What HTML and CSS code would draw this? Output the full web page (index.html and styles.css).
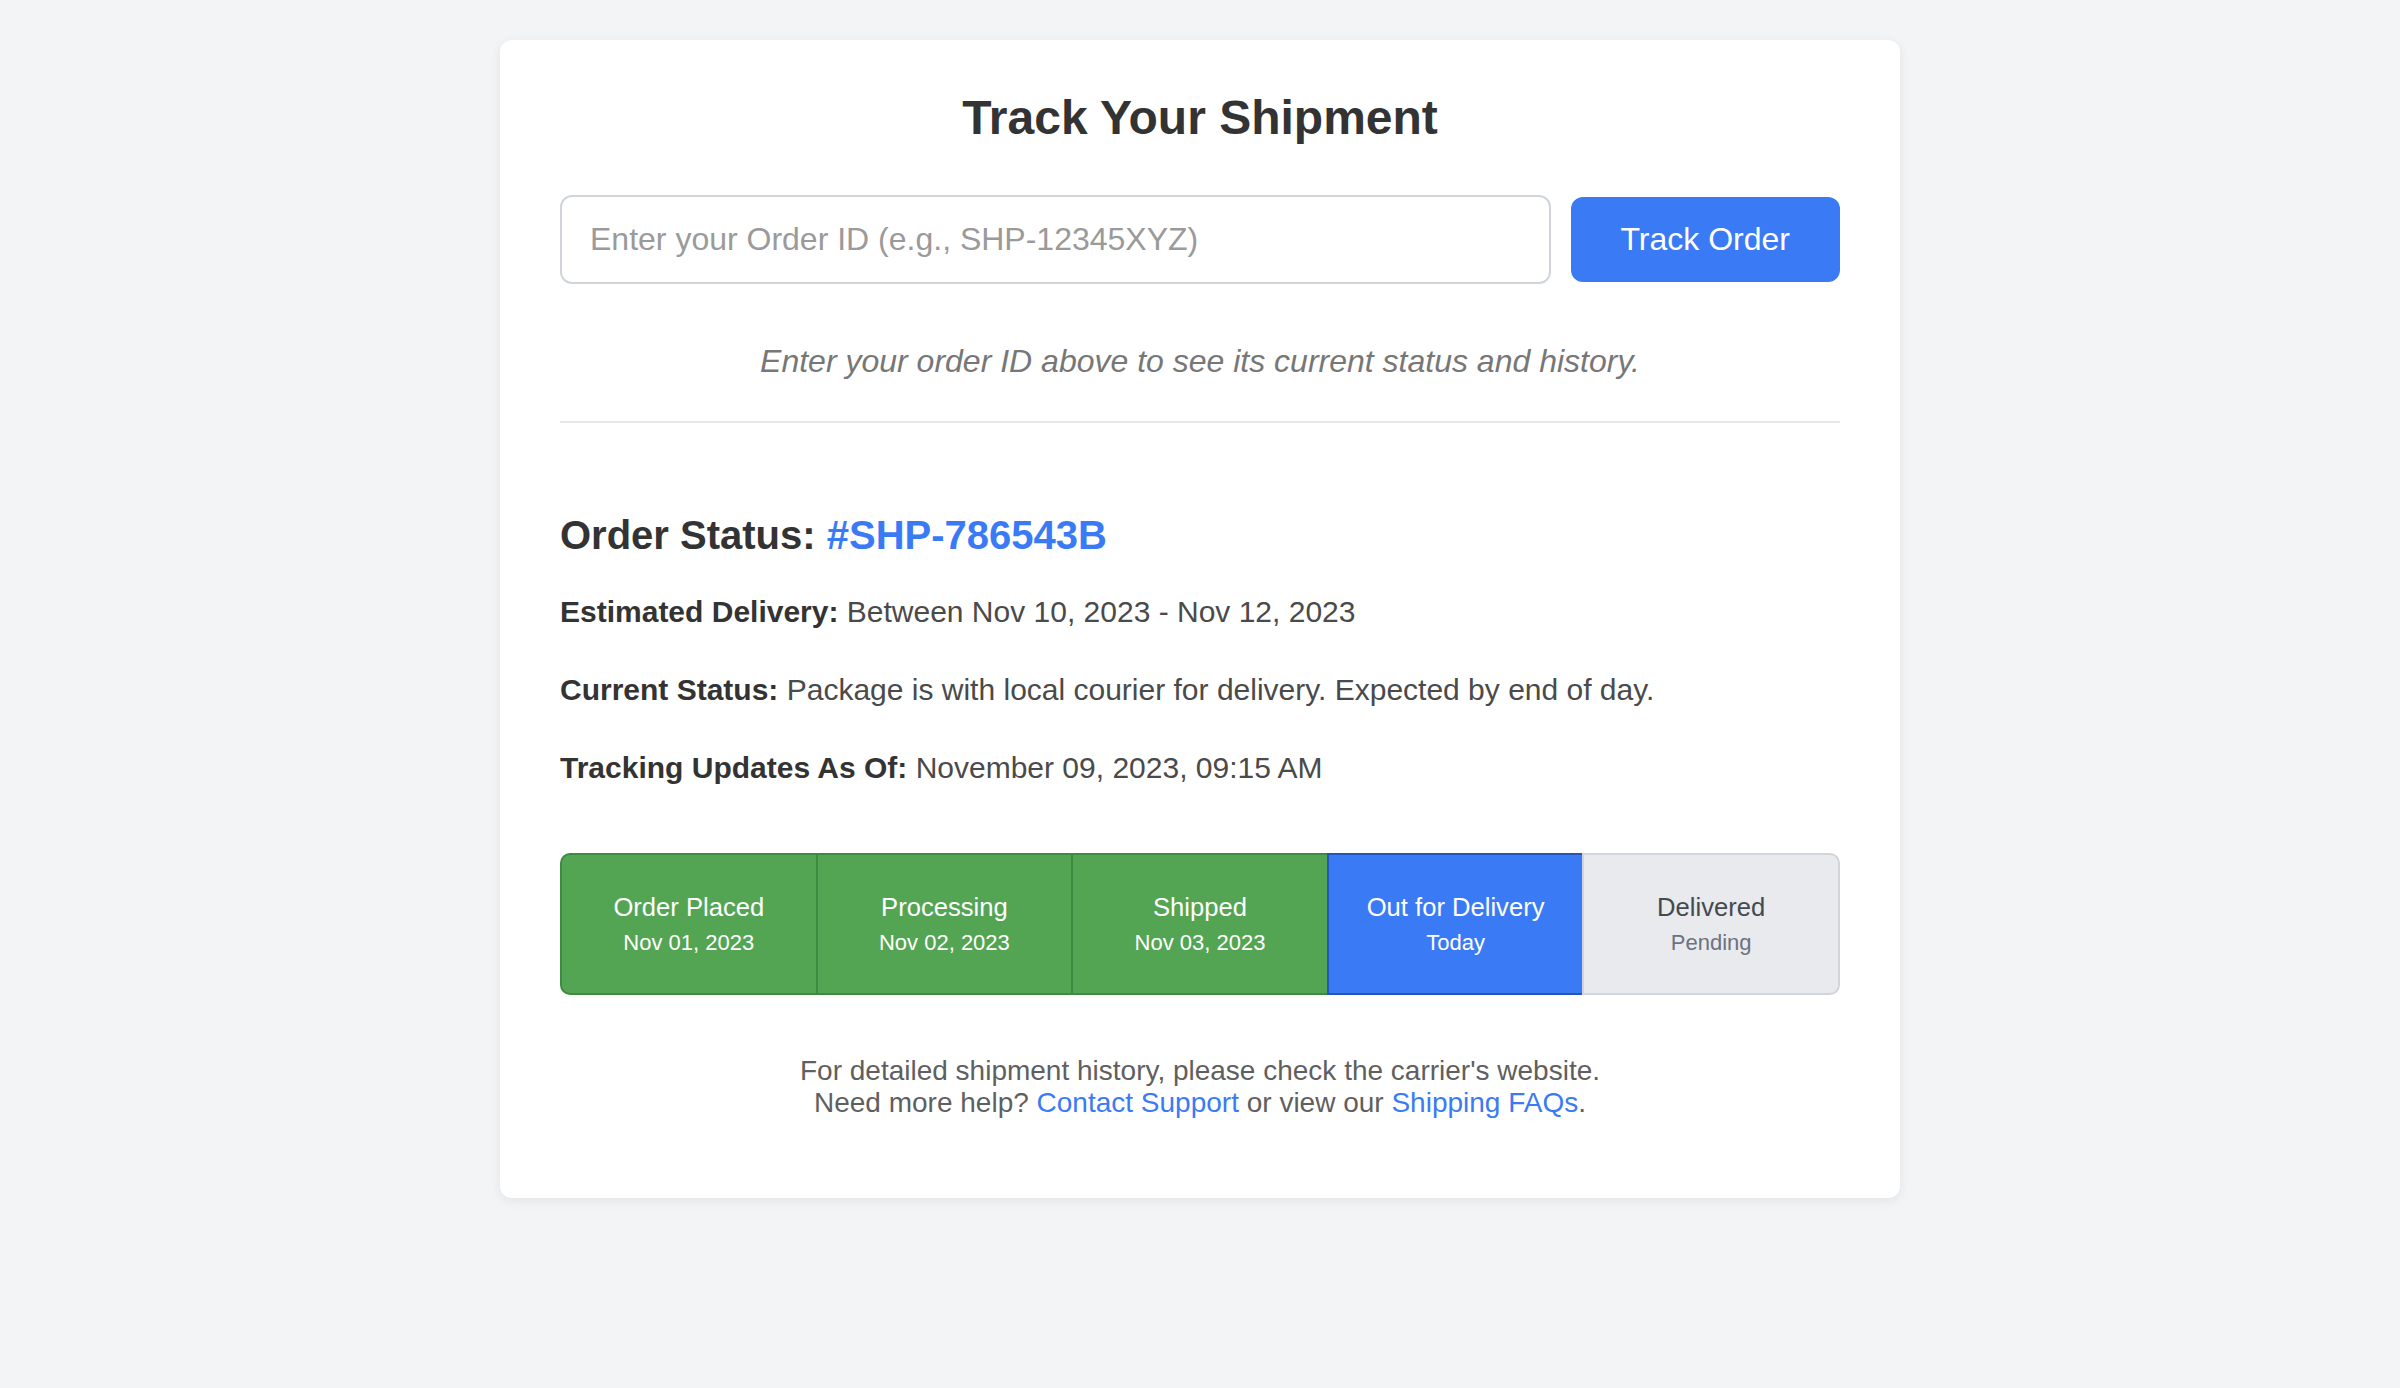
FILE: index.html
```html
<!DOCTYPE html>
<html lang="en">
<head>
<meta charset="utf-8">
<title>Track Your Shipment</title>
<link rel="stylesheet" href="styles.css">
</head>
<body>
<main class="card">
  <h1 class="title">Track Your Shipment</h1>
  <form class="search-row" onsubmit="return false;">
    <input class="order-input" type="text" placeholder="Enter your Order ID (e.g., SHP-12345XYZ)">
    <button class="track-btn" type="submit">Track Order</button>
  </form>
  <p class="hint">Enter your order ID above to see its current status and history.</p>

  <section class="results">
    <h2 class="status-heading">Order Status: <span class="order-id">#SHP-786543B</span></h2>
    <p class="info"><strong>Estimated Delivery:</strong> Between Nov 10, 2023 - Nov 12, 2023</p>
    <p class="info"><strong>Current Status:</strong> Package is with local courier for delivery. Expected by end of day.</p>
    <p class="info"><strong>Tracking Updates As Of:</strong> November 09, 2023, 09:15 AM</p>

    <div class="steps">
      <div class="step done"><div class="step-name">Order Placed</div><div class="step-date">Nov 01, 2023</div></div>
      <div class="step done"><div class="step-name">Processing</div><div class="step-date">Nov 02, 2023</div></div>
      <div class="step done"><div class="step-name">Shipped</div><div class="step-date">Nov 03, 2023</div></div>
      <div class="step current"><div class="step-name">Out for Delivery</div><div class="step-date">Today</div></div>
      <div class="step pending"><div class="step-name">Delivered</div><div class="step-date">Pending</div></div>
    </div>

    <p class="footer-note">For detailed shipment history, please check the carrier's website.<br>Need more help? <a href="#">Contact Support</a> or view our <a href="#">Shipping FAQs</a>.</p>
  </section>
</main>
</body>
</html>
```

FILE: styles.css
```css
* { box-sizing: border-box; }

html, body {
  margin: 0;
  padding: 0;
}

body {
  background: #f3f4f6;
  font-family: "Liberation Sans", Arial, Helvetica, sans-serif;
  color: #333;
  padding: 40px 0 60px;
}

.card {
  width: 1400px;
  margin: 0 auto;
  background: #ffffff;
  border-radius: 12px;
  box-shadow: 0 3px 12px rgba(0, 0, 0, 0.07);
  padding: 50px 60px 79px;
}

.title {
  margin: 0 0 50px;
  font-size: 48px;
  font-weight: bold;
  line-height: normal;
  text-align: center;
  color: #333;
}

.search-row {
  display: flex;
  align-items: center;
  gap: 20px;
  margin: 0;
}

.order-input {
  flex: 1;
  min-width: 0;
  font-family: inherit;
  font-size: 32px;
  line-height: normal;
  padding: 24px 28px;
  border: 2px solid #d1d5db;
  border-radius: 12px;
  color: #333;
  background: #fff;
  outline: none;
}

.order-input::placeholder {
  color: #9a9a9a;
}

.track-btn {
  font-family: inherit;
  font-size: 32px;
  line-height: normal;
  padding: 24px 50px;
  border: none;
  border-radius: 12px;
  background: #3a7bf5;
  color: #ffffff;
  cursor: pointer;
}

.hint {
  margin: 59px 0 41px;
  font-size: 32px;
  font-style: italic;
  line-height: normal;
  text-align: center;
  color: #777;
}

.results {
  border-top: 2px solid #e5e7eb;
  padding-top: 90px;
}

.status-heading {
  margin: 0 0 37px;
  font-size: 40px;
  font-weight: bold;
  line-height: normal;
  color: #333;
}

.order-id {
  color: #3a7bf5;
}

.info {
  margin: 0 0 44px;
  font-size: 30px;
  line-height: normal;
  color: #4a4a4a;
}

.info:last-of-type {
  margin-bottom: 0;
}

.info strong {
  color: #333;
}

.steps {
  display: flex;
  margin-top: 68px;
}

.step {
  flex: 1;
  text-align: center;
  padding: 37px 10px;
  border: 2px solid;
  border-right: 0;
}

.step:first-child {
  border-radius: 10px 0 0 10px;
}

.step:last-child {
  border-right: 2px solid;
  border-radius: 0 10px 10px 0;
}

.step-name {
  font-size: 25.6px;
  line-height: 30px;
}

.step-date {
  margin-top: 8px;
  font-size: 22px;
  line-height: 26px;
}

.step.done {
  background: #53a553;
  border-color: #3e8a40;
  color: #ffffff;
}

.step.current {
  background: #3a7bf5;
  border-color: #2456b9;
  color: #ffffff;
}

.step.pending {
  background: #e9eaee;
  border-color: #d1d5db;
  color: #45494f;
}

.step.pending .step-date {
  color: #6b7280;
}

.footer-note {
  margin: 60px 0 0;
  font-size: 28px;
  line-height: normal;
  text-align: center;
  color: #5f5f5f;
}

.footer-note a {
  color: #3a7bf5;
  text-decoration: none;
}
```
